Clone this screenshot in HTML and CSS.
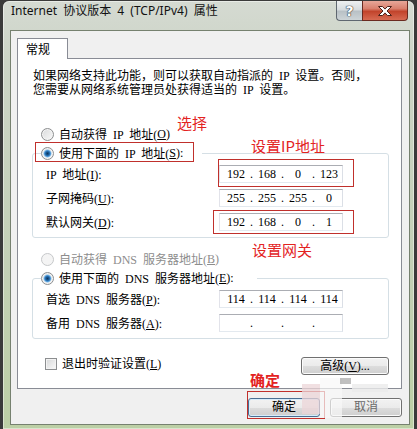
FILE: index.html
```html
<!DOCTYPE html>
<html lang="zh-CN">
<head>
  <meta charset="UTF-8" />
  <title>Internet 协议版本 4 (TCP/IPv4) 属性</title>
  <link rel="stylesheet" href="styles.css">
</head>
<body>
  <div class="window">
    <div class="titlebar">
      <span class="title">Internet 协议版本 4 (TCP/IPv4) 属性</span>
      <div class="caption-buttons">
        <span class="btn-help">?</span>
        <span class="btn-close">
          <svg width="16" height="12" viewBox="0 0 16 12">
            <path d="M1.5 1.5 h4 l2.5 2.6 l2.5-2.6 h4 l-4.5 4.5 l4.5 4.5 h-4 l-2.5-2.6 l-2.5 2.6 h-4 l4.5-4.5 z" fill="#fff" stroke="#4a2019" stroke-width="1" stroke-linejoin="round"/>
          </svg>
        </span>
      </div>
    </div>

    <div class="client">
      <div class="tabs"><span class="tab">常规</span></div>

      <div class="panel">
        <p class="intro">如果网络支持此功能，则可以获取自动指派的 IP 设置。否则，<br>您需要从网络系统管理员处获得适当的 IP 设置。</p>

        <div class="option first-option"><span class="radio"></span>自动获得 IP 地址(<u>O</u>)</div>

        <fieldset class="group">
          <legend><span class="option"><span class="radio checked"></span>使用下面的 IP 地址(<u>S</u>):</span></legend>
          <div class="rows">
            <div class="field-row">
              <label>IP 地址(<u>I</u>):</label>
              <div class="ip-box"><span class="seg">192</span><span class="dot">.</span><span class="seg">168</span><span class="dot">.</span><span class="seg">0</span><span class="dot">.</span><span class="seg">123</span></div>
            </div>
            <div class="field-row">
              <label>子网掩码(<u>U</u>):</label>
              <div class="ip-box"><span class="seg">255</span><span class="dot">.</span><span class="seg">255</span><span class="dot">.</span><span class="seg">255</span><span class="dot">.</span><span class="seg">0</span></div>
            </div>
            <div class="field-row">
              <label>默认网关(<u>D</u>):</label>
              <div class="ip-box"><span class="seg">192</span><span class="dot">.</span><span class="seg">168</span><span class="dot">.</span><span class="seg">0</span><span class="dot">.</span><span class="seg">1</span></div>
            </div>
          </div>
        </fieldset>

        <div class="option dns-auto disabled"><span class="radio"></span>自动获得 DNS 服务器地址(<u>B</u>)</div>

        <fieldset class="group group-dns">
          <legend><span class="option"><span class="radio checked"></span>使用下面的 DNS 服务器地址(<u>E</u>):</span></legend>
          <div class="rows">
            <div class="field-row">
              <label>首选 DNS 服务器(<u>P</u>):</label>
              <div class="ip-box"><span class="seg">114</span><span class="dot">.</span><span class="seg">114</span><span class="dot">.</span><span class="seg">114</span><span class="dot">.</span><span class="seg">114</span></div>
            </div>
            <div class="field-row">
              <label>备用 DNS 服务器(<u>A</u>):</label>
              <div class="ip-box"><span class="seg"></span><span class="dot">.</span><span class="seg"></span><span class="dot">.</span><span class="seg"></span><span class="dot">.</span><span class="seg"></span></div>
            </div>
          </div>
        </fieldset>

        <div class="bottom-row">
          <div class="check-option"><span class="checkbox"></span>退出时验证设置(<u>L</u>)</div>
          <button class="btn btn-advanced">高级(<u>V</u>)...</button>
        </div>
      </div>

      <div class="dialog-buttons">
        <button class="btn btn-ok">确定</button>
        <button class="btn btn-cancel">取消</button>
      </div>
    </div>
  </div>

  <!-- red notes drawn over the screenshot -->
  <div class="notes">
    <span class="note-text note-select">选择</span>
    <span class="note-text note-ip">设置IP地址</span>
    <span class="note-text note-gateway">设置网关</span>
    <span class="note-text note-ok">确定</span>
    <span class="note-box box-radio"></span>
    <span class="note-box box-ip"></span>
    <span class="note-box box-gateway"></span>
    <span class="note-box box-ok"></span>
  </div>

  <!-- blurred site watermark -->
  <div class="watermark">
    <span class="wm wm-1"></span>
    <span class="wm wm-2"></span>
    <span class="wm wm-3"></span>
    <span class="wm wm-4"></span>
  </div>
</body>
</html>
```

FILE: styles.css
```css
* {
  box-sizing: border-box;
  margin: 0;
  padding: 0;
}

body {
  position: relative;
  width: 417px;
  height: 429px;
  overflow: hidden;
  background-color: #3a3a3a;
  font: 12px "Liberation Serif", "Noto Sans CJK SC", serif;
  word-spacing: 3px;
  color: #000;
}

u {
  text-decoration: underline;
}

.window {
  margin: 1px 3px 0 3px;
  height: 428px;
  border-radius: 6px 6px 0 0;
  background: linear-gradient(to bottom, #d5dad2 0, #ccd4c6 60px, #c3d0b6 260px, #bccfa5 100%);
  box-shadow: inset 0 0 0 1px rgba(255, 255, 255, 0.45);
}

.titlebar {
  display: flex;
  justify-content: space-between;
  height: 29px;
}

.title {
  padding-left: 8px;
  line-height: 29px;
  font: 12px "Noto Sans", "Noto Sans CJK SC", sans-serif;
  color: #111;
}

.caption-buttons {
  display: flex;
  margin-right: 6px;
}

.btn-help,
.btn-close {
  display: flex;
  justify-content: center;
  align-items: center;
  height: 20px;
  border: 1px solid #5f6770;
  border-top: none;
}

.btn-help {
  width: 26px;
  border-radius: 0 0 0 4px;
  border-right: none;
  background: linear-gradient(to bottom, #eef0f1 0, #d7dcdf 45%, #b9c1c6 55%, #cdd4d7 100%);
  color: #fff;
  font: bold 14px "DejaVu Sans", sans-serif;
  text-shadow: 0 0 1px #303840, 0 0 1px #303840, 0 0 1px #303840;
}

.btn-close {
  width: 46px;
  border-color: #6a2a20;
  border-radius: 0 0 4px 0;
  background: linear-gradient(to bottom, #e7a799 0, #d9806e 40%, #c2442c 55%, #d76a52 100%);
}

.client {
  margin: 0 4px 0 7px;
  border: 1px solid #76816f;
  background-color: #f0f0f0;
  padding: 7px 7px 7px 6px;
}

.tabs {
  display: flex;
  height: 21px;
  margin-bottom: -1px;
}

.tab {
  position: relative;
  width: 51px;
  height: 21px;
  padding-left: 8px;
  border: 1px solid #898c95;
  border-bottom: none;
  background-color: #fff;
  font-family: "Noto Sans CJK SC", sans-serif;
  line-height: 20px;
}

.panel {
  border: 1px solid #898c95;
  background-color: #fff;
  padding: 10px 12px 13px 14px;
}

.intro {
  padding-left: 1px;
  line-height: 14px;
}

.option {
  display: flex;
  align-items: center;
  height: 16px;
  white-space: nowrap;
}

.first-option {
  margin: 29px 0 0 9px;
}

.dns-auto {
  margin: 13px 0 0 9px;
}

.disabled {
  color: #8d8d8d;
}

.radio {
  width: 13px;
  height: 13px;
  margin-right: 5px;
  border: 1px solid #8c8e90;
  border-radius: 50%;
  background: linear-gradient(135deg, #d9dadb, #f9f9f9);
  box-shadow: inset 0 0 0 1px #f4f4f4;
}

.radio.checked {
  background:
    radial-gradient(circle, #0f375c 0, #1c5f9e 1.8px, #4d97d6 3px, #a6d0ee 3.8px, transparent 4.4px),
    linear-gradient(135deg, #d9dadb, #f9f9f9);
}

.disabled .radio {
  border-color: #c6c8ca;
  background: #f4f4f4;
  box-shadow: none;
}

.group {
  margin-top: 3px;
  padding: 0 0 6px 8px;
  border: 1px solid #d5dfe5;
  border-radius: 3px;
}

.group legend {
  padding: 0 19px 0 0;
}

.group-dns legend {
  padding-right: 23px;
}

.rows {
  display: grid;
  gap: 6px;
  padding-top: 4px;
}

.field-row {
  display: flex;
  align-items: center;
  height: 18px;
  margin-left: 5px;
}

.field-row label {
  width: 173px;
  white-space: nowrap;
}

.ip-box {
  display: flex;
  width: 124px;
  height: 18px;
  padding-left: 4px;
  border: 1px solid;
  border-color: #abadb3 #dbdfe6 #e3e9ef #e2e3ea;
  background-color: #fff;
  line-height: 16px;
  word-spacing: 0;
}

.seg {
  width: 24px;
  text-align: center;
}

.dot {
  width: 7px;
  text-align: center;
}

.bottom-row {
  display: flex;
  justify-content: space-between;
  align-items: flex-start;
  margin-top: 18px;
}

.check-option {
  display: flex;
  align-items: center;
  margin: 0 0 0 13px;
  height: 14px;
  line-height: 14px;
}

.checkbox {
  width: 12px;
  height: 12px;
  margin-right: 5px;
  border: 1px solid #8c8e90;
  background: linear-gradient(135deg, #d6d7d8, #fafafa);
  box-shadow: inset 0 0 0 1px #f3f3f3;
}

.btn {
  border: 1px solid #707070;
  border-radius: 3px;
  background: linear-gradient(to bottom, #f2f2f2 0, #ebebeb 50%, #dddddd 50%, #cfcfcf 100%);
  box-shadow: inset 0 0 0 1px #fbfbfb;
  font: 12px "Liberation Serif", "Noto Sans CJK SC", serif;
  word-spacing: 3px;
  color: #000;
}

.btn-advanced {
  width: 88px;
  height: 18px;
  line-height: 14px;
}

.dialog-buttons {
  display: flex;
  justify-content: flex-end;
  gap: 10px;
  margin-top: 9px;
}

.btn-ok,
.btn-cancel {
  width: 72px;
  height: 19px;
  line-height: 15px;
}

.btn-ok {
  border-color: #4a6f94;
  box-shadow: inset 0 0 0 1px #d7ecfa;
}

.btn-cancel {
  color: #6a6a6a;
}

/* annotations */
.notes {
  position: absolute;
  inset: 0;
  pointer-events: none;
}

.note-text {
  position: absolute;
  font: 15px "Noto Sans CJK SC", sans-serif;
  line-height: 15px;
  color: #e3231f;
  word-spacing: 0;
  white-space: nowrap;
}

.note-select { left: 177px; top: 115px; }
.note-ip { left: 251px; top: 138px; }
.note-gateway { left: 252px; top: 242px; }
.note-ok { left: 250px; top: 372px; font-weight: bold; }

.note-box {
  position: absolute;
  border: 1px solid #c0302c;
}

.box-radio { left: 35px; top: 142px; width: 159px; height: 20px; }
.box-ip { left: 218px; top: 159px; width: 136px; height: 28px; }
.box-gateway { left: 213px; top: 210px; width: 141px; height: 24px; }
.box-ok { left: 247px; top: 391px; width: 78px; height: 28px; }

.watermark {
  position: absolute;
  inset: 0;
  pointer-events: none;
}

.wm {
  position: absolute;
}

.wm-1 { left: 302px; top: 384px; width: 18px; height: 30px; background: rgba(236, 214, 216, 0.75); }
.wm-2 { left: 320px; top: 378px; width: 22px; height: 40px; background: rgba(248, 248, 248, 0.7); }
.wm-3 { left: 340px; top: 378px; width: 11px; height: 6px; background: rgba(150, 150, 150, 0.6); }
.wm-4 { left: 352px; top: 384px; width: 36px; height: 8px; background: rgba(235, 235, 235, 0.8); }
```
